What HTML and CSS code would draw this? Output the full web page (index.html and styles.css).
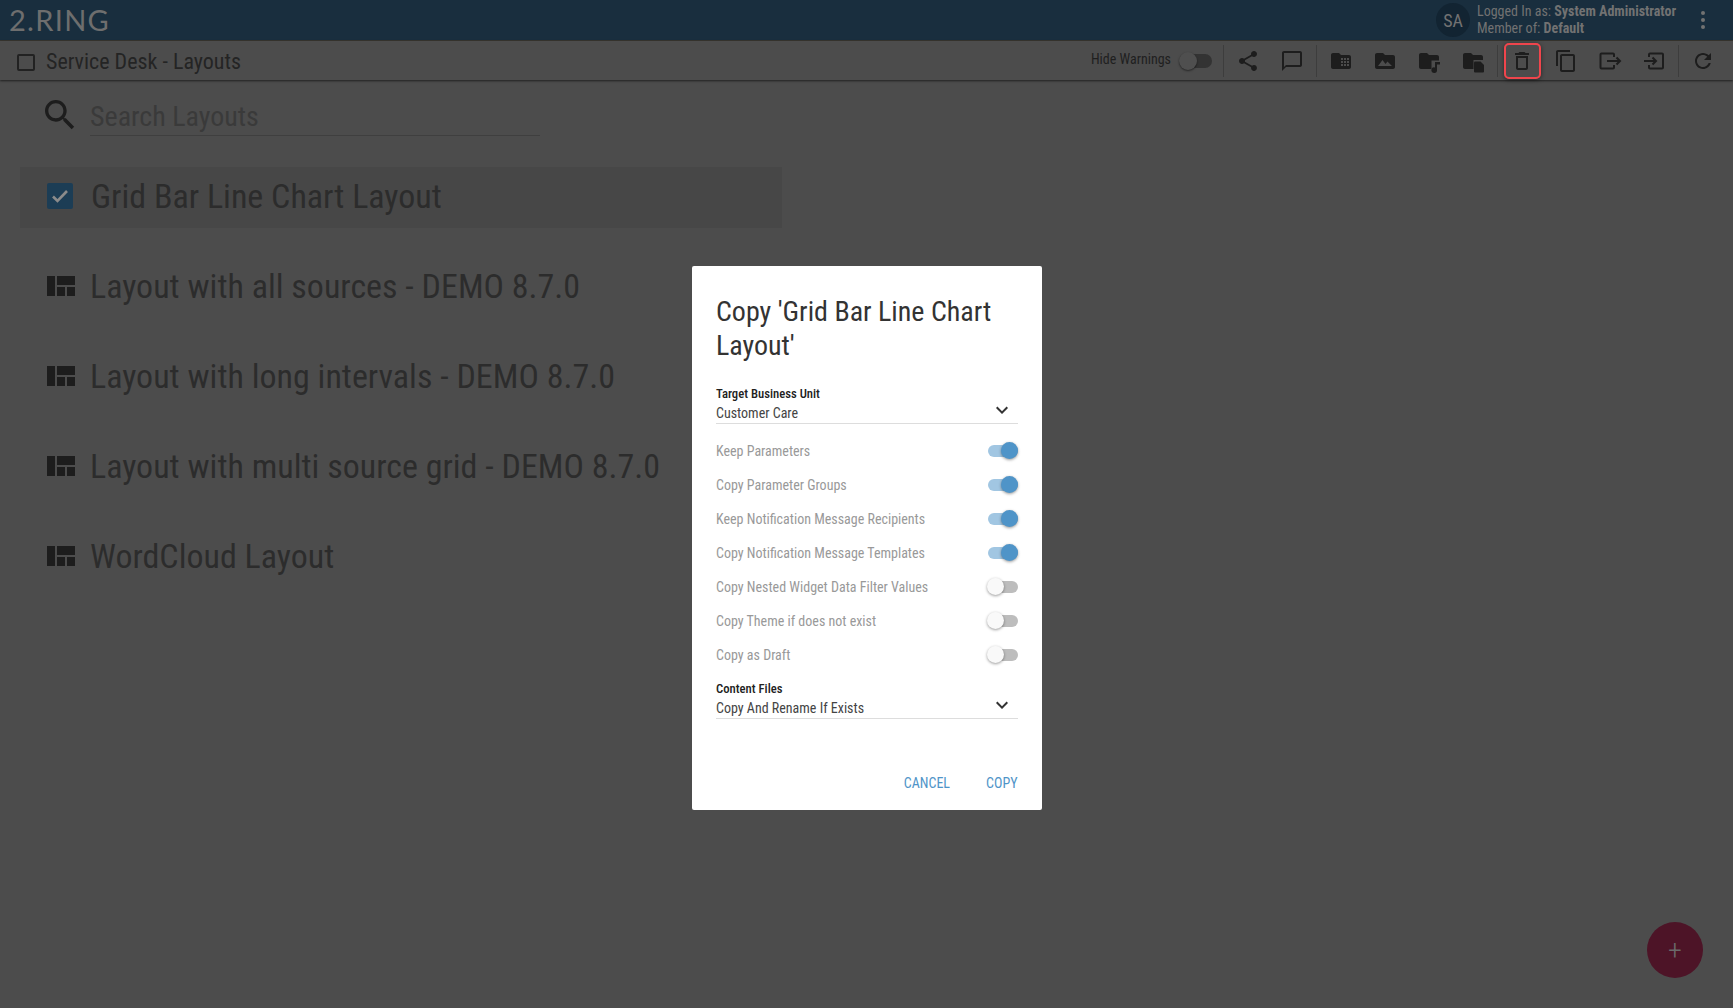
FILE: index.html
```html
<!DOCTYPE html>
<html lang="en">
  <head>
    <meta charset="UTF-8" />
    <meta name="viewport" content="width=device-width, initial-scale=1.0" />
    <title>Service Desk - Layouts</title>
    <link rel="stylesheet" href="styles.css">
  </head>
  <body>
    <header class="topbar">
      <span class="logo">2.RING</span>
      <div class="user">
        <span class="avatar">SA</span>
        <div class="user-text">
          <div>Logged In as: <b>System Administrator</b></div>
          <div>Member of: <b>Default</b></div>
        </div>
        <span class="kebab"><i></i><i></i><i></i></span>
      </div>
    </header>

    <div class="toolbar">
      <span class="page-check"></span>
      <span class="page-title">Service Desk - Layouts</span>
      <div class="tools">
        <span class="hide-label">Hide Warnings</span>
        <span class="bar-toggle"><i></i></span>
        <span class="sep first-sep"></span>
        <span class="tool"><svg viewBox="0 0 24 24"><path d="M18 16.08c-.76 0-1.44.3-1.96.77L8.91 12.7c.05-.23.09-.46.09-.7s-.04-.47-.09-.7l7.05-4.11c.54.5 1.25.81 2.04.81 1.66 0 3-1.34 3-3s-1.34-3-3-3-3 1.34-3 3c0 .24.04.47.09.7L8.04 9.81C7.5 9.31 6.79 9 6 9c-1.66 0-3 1.34-3 3s1.34 3 3 3c.79 0 1.5-.31 2.04-.81l7.12 4.16c-.05.21-.08.43-.08.65 0 1.61 1.31 2.92 2.92 2.92 1.61 0 2.92-1.31 2.92-2.92s-1.31-2.92-2.92-2.92z"/></svg></span>
        <span class="tool"><svg viewBox="0 0 24 24"><path d="M20 2H4c-1.1 0-2 .9-2 2v18l4-4h14c1.1 0 2-.9 2-2V4c0-1.1-.9-2-2-2zm0 14H6l-2 2V4h16v12z"/></svg></span>
        <span class="sep"></span>
        <span class="tool"><svg viewBox="0 0 24 24"><path d="M10 4H4c-1.1 0-1.99.9-1.99 2L2 18c0 1.1.9 2 2 2h16c1.1 0 2-.9 2-2V8c0-1.1-.9-2-2-2h-8l-2-2z"/><path class="cut" d="M12 9h2v2h-2zM15 9h2v2h-2zM18 9h2v2h-2zM12 12h2v2h-2zM15 12h2v2h-2zM18 12h2v2h-2zM12 15h2v2h-2zM15 15h2v2h-2zM18 15h2v2h-2z"/></svg></span>
        <span class="tool"><svg viewBox="0 0 24 24"><path d="M10 4H4c-1.100 0-1.990.9-1.990 2L2 18c0 1.100.9 2 2 2h16c1.100 0 2-.9 2-2V8c0-1.100-.9-2-2-2h-8l-2-2z"/><path class="cut" d="M5 17l4.500-6 3 4 2-2.500 4.500 4.500z"/></svg></span>
        <span class="tool"><svg viewBox="0 0 24 24"><path d="M10 4H4c-1.100 0-1.990.9-1.990 2L2 18c0 1.100.9 2 2 2h10.500v-8.500H22V8c0-1.100-.9-2-2-2h-8l-2-2z"/><path d="M18 13h5v2.500h-3V21a2.800 2.800 0 1 1-2-2.600z"/></svg></span>
        <span class="tool"><svg viewBox="0 0 24 24"><path d="M10 4H4c-1.100 0-1.990.9-1.990 2L2 18c0 1.100.9 2 2 2h8.500v-9H22V8c0-1.100-.9-2-2-2h-8l-2-2z"/><path d="M14 12.500h5.500l3.500 3.500v6.500a1 1 0 0 1-1 1h-8a1 1 0 0 1-1-1v-9a1 1 0 0 1 1-1z"/></svg></span>
        <span class="sep"></span>
        <span class="tool tool-active"><svg viewBox="0 0 24 24"><path d="M6 19c0 1.100.9 2 2 2h8c1.100 0 2-.9 2-2V7H6v12zM8 9h8v10H8V9zm7.500-5l-1-1h-5l-1 1H5v2h14V4z"/></svg></span>
        <span class="tool"><svg viewBox="0 0 24 24"><path d="M16 1H4c-1.100 0-2 .9-2 2v14h2V3h12V1zm3 4H8c-1.100 0-2 .9-2 2v14c0 1.100.9 2 2 2h11c1.100 0 2-.9 2-2V7c0-1.100-.9-2-2-2zm0 16H8V7h11v14z"/></svg></span>
        <span class="tool"><svg class="line" viewBox="0 0 24 24"><path d="M16 8V5.500a1 1 0 0 0-1-1H3.500a1 1 0 0 0-1 1v13a1 1 0 0 0 1 1H15a1 1 0 0 0 1-1V16M9 12h13M18.500 8.500L22 12l-3.500 3.500"/></svg></span>
        <span class="tool"><svg class="line" viewBox="0 0 24 24"><path d="M7 8V5.500a1 1 0 0 1 1-1h12a1 1 0 0 1 1 1v13a1 1 0 0 1-1 1H8a1 1 0 0 1-1-1V16M2 12h12M10.500 8.500L14 12l-3.500 3.500"/></svg></span>
        <span class="sep"></span>
        <span class="tool"><svg viewBox="0 0 24 24"><path d="M17.650 6.350C16.200 4.900 14.210 4 12 4c-4.420 0-7.990 3.580-7.990 8s3.570 8 7.990 8c3.730 0 6.840-2.550 7.730-6h-2.080c-.82 2.330-3.040 4-5.650 4-3.310 0-6-2.690-6-6s2.690-6 6-6c1.660 0 3.140.69 4.220 1.780L13 11h7V4l-2.350 2.350z"/></svg></span>
      </div>
    </div>

    <main class="content">
      <div class="search">
        <svg class="search-icon" viewBox="0 0 24 24"><path d="M15.500 14h-.79l-.28-.27C15.410 12.590 16 11.110 16 9.500 16 5.910 13.090 3 9.500 3S3 5.910 3 9.500 5.910 16 9.500 16c1.610 0 3.090-.59 4.230-1.570l.27.28v.79l5 4.990L20.490 19l-4.990-5zm-6 0C7.010 14 5 11.990 5 9.500S7.010 5 9.500 5 14 7.010 14 9.500 11.990 14 9.500 14z"/></svg>
        <span class="search-input">Search Layouts</span>
      </div>
      <ul class="layouts">
        <li class="layout selected">
          <svg class="layout-icon" viewBox="0 0 26 26"><rect x="0" y="0" width="26" height="26" rx="2" fill="#1c3d55"/><path d="M6 13.500l4.500 4.500 9.500-10" fill="none" stroke="#8b8b8b" stroke-width="2.600"/></svg>
          Grid Bar Line Chart Layout
        </li>
        <li class="layout"><svg class="layout-icon" viewBox="0 0 30 24"><path d="M1 2h8v20H1zM11 2h18v9H11zM11 13h8v9h-8zM21 13h8v9h-8z"/></svg>Layout with all sources - DEMO 8.7.0</li>
        <li class="layout"><svg class="layout-icon" viewBox="0 0 30 24"><path d="M1 2h8v20H1zM11 2h18v9H11zM11 13h8v9h-8zM21 13h8v9h-8z"/></svg>Layout with long intervals - DEMO 8.7.0</li>
        <li class="layout"><svg class="layout-icon" viewBox="0 0 30 24"><path d="M1 2h8v20H1zM11 2h18v9H11zM11 13h8v9h-8zM21 13h8v9h-8z"/></svg>Layout with multi source grid - DEMO 8.7.0</li>
        <li class="layout"><svg class="layout-icon" viewBox="0 0 30 24"><path d="M1 2h8v20H1zM11 2h18v9H11zM11 13h8v9h-8zM21 13h8v9h-8z"/></svg>WordCloud Layout</li>
      </ul>
    </main>

    <span class="fab">+</span>

    <div class="backdrop">
      <div class="dialog">
        <h2>Copy 'Grid Bar Line Chart Layout'</h2>

        <div class="select">
          <label>Target Business Unit</label>
          <div class="select-value">Customer Care
            <svg viewBox="0 0 24 24"><path d="M7.410 8.590L12 13.170l4.590-4.580L18 10l-6 6-6-6z"/></svg>
          </div>
        </div>

        <div class="options">
          <div class="option">Keep Parameters<span class="switch on"><i></i></span></div>
          <div class="option">Copy Parameter Groups<span class="switch on"><i></i></span></div>
          <div class="option">Keep Notification Message Recipients<span class="switch on"><i></i></span></div>
          <div class="option">Copy Notification Message Templates<span class="switch on"><i></i></span></div>
          <div class="option">Copy Nested Widget Data Filter Values<span class="switch"><i></i></span></div>
          <div class="option">Copy Theme if does not exist<span class="switch"><i></i></span></div>
          <div class="option">Copy as Draft<span class="switch"><i></i></span></div>
        </div>

        <div class="select">
          <label>Content Files</label>
          <div class="select-value">Copy And Rename If Exists
            <svg viewBox="0 0 24 24"><path d="M7.410 8.590L12 13.170l4.590-4.580L18 10l-6 6-6-6z"/></svg>
          </div>
        </div>

        <div class="actions">
          <button type="button">CANCEL</button>
          <button type="button">COPY</button>
        </div>
      </div>
    </div>
  </body>
</html>
```

FILE: styles.css
```css
* {
  box-sizing: border-box;
}
html,
body {
  height: 100%;
}
body {
  margin: 0;
  overflow: hidden;
  background: #4c4c4c;
  color: #2b2b2b;
  font-family: Roboto, sans-serif;
  font-stretch: 75%;
}

.topbar {
  height: 41px;
  background: #192e3e;
  border-bottom: 1px solid #37352f;
  display: flex;
  align-items: center;
  justify-content: space-between;
  padding: 0 18px 0 9px;
  color: #727272;
}
.logo {
  font-family: Lato, sans-serif;
  font-weight: 400;
  font-size: 29px;
  letter-spacing: 1.3px;
  line-height: 40px;
  color: #6e6e6e;
  font-stretch: normal;
}
.user {
  display: flex;
  align-items: center;
}
.avatar {
  width: 34px;
  height: 34px;
  border-radius: 50%;
  background: #122432;
  display: flex;
  align-items: center;
  justify-content: center;
  font-size: 18px;
  margin-right: 7px;
}
.user-text {
  font-size: 14px;
  line-height: 17px;
  width: 214px;
}
.user-text b {
  font-weight: 700;
}
.kebab {
  width: 24px;
  display: flex;
  flex-direction: column;
  align-items: center;
  gap: 3px;
}
.kebab i {
  width: 4px;
  height: 4px;
  border-radius: 50%;
  background: #727272;
}

.toolbar {
  height: 39px;
  display: flex;
  align-items: center;
  padding: 0 8px 0 17px;
  box-shadow: 0 1px 2px rgba(0, 0, 0, 0.6);
  position: relative;
}
.page-check {
  width: 18px;
  height: 17px;
  border: 2px solid #222;
  border-radius: 2px;
  margin-top: 4px;
}
.page-title {
  font-size: 22px;
  margin: 2px 0 0 11px;
  color: #242424;
}
.tools {
  margin-left: auto;
  display: flex;
  align-items: center;
}
.hide-label {
  font-size: 14px;
  color: #1f1f1f;
  margin-top: -4px;
}
.bar-toggle {
  width: 33px;
  height: 14px;
  margin-left: 8px;
  border-radius: 7px;
  background: #333;
  position: relative;
}
.bar-toggle i {
  position: absolute;
  left: 0;
  top: -2px;
  width: 18px;
  height: 18px;
  border-radius: 50%;
  background: #4f4f4f;
  box-shadow: 0 1px 2px rgba(0, 0, 0, 0.5);
}
.sep {
  width: 5px;
  height: 32px;
  background: linear-gradient(#3d3d3d, #3d3d3d) center / 1px 100% no-repeat;
}
.first-sep {
  margin-left: 9px;
}
.tool {
  width: 44px;
  height: 36px;
  display: flex;
  align-items: center;
  justify-content: center;
}
.tool svg {
  width: 24px;
  height: 24px;
  fill: #1d1d1d;
}
.tool svg .cut {
  fill: #4c4c4c;
}
.tool svg.line {
  fill: none;
  stroke: #1d1d1d;
  stroke-width: 2;
}
.tool-active {
  width: 37px;
  margin: 0 3.5px;
  border: 2px solid #f0454c;
  border-radius: 5px;
  box-shadow: 0 1px 4px rgba(0, 0, 0, 0.5);
}

.content {
  padding: 14px 20px 0;
}
.search {
  display: flex;
  align-items: center;
  padding-left: 22px;
  height: 42px;
}
.search-icon {
  width: 40px;
  height: 40px;
  fill: #1d1d1d;
  margin-left: -2px;
  flex: none;
}
.search-input {
  width: 450px;
  margin-left: 10px;
  font-size: 28px;
  line-height: 42px;
  padding-top: 2px;
  height: 42px;
  color: #3a3a3a;
  border-bottom: 1px solid #3f3f3f;
}
.layouts {
  list-style: none;
  margin: 31px 0 0;
  padding: 0;
  width: 762px;
}
.layout {
  height: 61px;
  margin-bottom: 29px;
  padding: 0 0 3px 26px;
  display: flex;
  align-items: center;
  font-size: 34px;
  color: #2c2c2c;
  white-space: nowrap;
}
.layout.selected {
  background: #474747;
}
.layout-icon {
  width: 30px;
  height: 24px;
  margin-right: 14px;
  fill: #1d1d1d;
  flex: none;
}
.selected .layout-icon {
  width: 26px;
  height: 26px;
  margin: 0 18px 0 1px;
}

.fab {
  position: absolute;
  right: 30px;
  bottom: 30px;
  width: 56px;
  height: 56px;
  border-radius: 50%;
  background: #4d1427;
  color: #6a6a6a;
  font-size: 28px;
  font-weight: 300;
  display: flex;
  align-items: center;
  justify-content: center;
}

.backdrop {
  position: absolute;
  inset: 0;
  display: flex;
  justify-content: center;
  padding-top: 266px;
}
.dialog {
  width: 350px;
  height: 544px;
  background: #fff;
  border-radius: 2px;
  padding: 24px 24px 18px 24.500px;
  display: flex;
  flex-direction: column;
  color: #333;
}
.dialog h2 {
  margin: 5px 0 22px;
  font-size: 28px;
  font-weight: 400;
  line-height: 34px;
}
.select label {
  display: block;
  font-size: 12.700px;
  font-weight: 500;
  line-height: 18px;
  color: #212121;
}
.select-value {
  display: flex;
  justify-content: space-between;
  align-items: center;
  font-size: 14px;
  line-height: 20px;
  height: 21px;
  padding-bottom: 1px;
  border-bottom: 1px solid #ddd;
  color: #444;
}
.select-value svg {
  width: 24px;
  height: 24px;
  margin: -6px 4px 0 0;
  fill: #333;
}
.options {
  margin: 10px 0 8px;
}
.option {
  height: 34px;
  display: flex;
  align-items: center;
  justify-content: space-between;
  font-size: 14px;
  color: #999;
}
.switch {
  width: 30px;
  height: 12px;
  border-radius: 6px;
  background: #bdbdbd;
  position: relative;
}
.switch i {
  position: absolute;
  left: -1px;
  top: -3px;
  width: 17px;
  height: 17px;
  border-radius: 50%;
  background: #f9f9f9;
  box-shadow: 0 1px 3px rgba(0, 0, 0, 0.4);
}
.switch.on {
  background: #a1c6e2;
}
.switch.on i {
  left: auto;
  right: 0;
  background: #4f94c8;
}
.actions {
  margin-top: auto;
  display: flex;
  justify-content: flex-end;
  gap: 36px;
}
.actions button {
  border: none;
  background: none;
  padding: 0;
  font: inherit;
  font-size: 14px;
  color: #4f94c8;
  line-height: 18px;
}
```
